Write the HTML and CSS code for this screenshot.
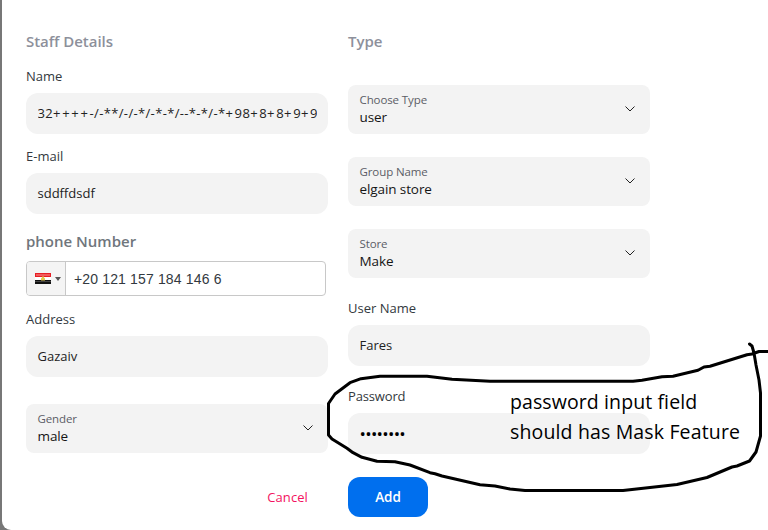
FILE: index.html
```html
<!DOCTYPE html>
<html lang="en">
<head>
<meta charset="utf-8">
<title>Add staff</title>
<link rel="stylesheet" href="styles.css">
</head>
<body>
<main class="dialog">
  <form class="columns">
    <section class="column">
      <h2 class="heading"><span>Staff Details</span></h2>
      <label class="label name-label"><span>Name</span></label>
      <div class="field"><div class="clip"><span class="long">32<i>++++</i>-/-**/-/-*/-*-*/--*-*/-*<i>+</i>98<i>+</i>8<i>+</i>8<i>+</i>9<i>+</i>9</span></div></div>
      <label class="label email-label"><span>E-mail</span></label>
      <div class="field"><span class="email">sddffdsdf</span></div>
      <h2 class="heading phone-heading"><span>phone Number</span></h2>
      <div class="phone">
        <div class="country">
          <svg width="16" height="11" viewBox="0 0 16 11"><path fill="#e71e25" d="M0 0h16v4H0z"/><path fill="#f15c5c" d="M1 1h14v2H1z"/><path fill="#fff" d="M0 4h16v3H0z"/><path fill="#111" d="M0 7h16v4H0z"/><path fill="#444" d="M0 8h16v1H0z"/><path fill="#e5c94d" d="M7 3.500h2v1l1 1v2H6v-2l1-1z"/></svg>
          <svg class="caret" width="6" height="4" viewBox="0 0 6 4"><path d="M0 0h6L3 4z" fill="#555"/></svg>
        </div>
        <span class="number">+20 121 157 184 146 6</span>
      </div>
      <label class="label address-label"><span>Address</span></label>
      <div class="field"><span>Gazaiv</span></div>
      <div class="select gender"><div><small>Gender</small><b>male</b></div><svg class="chevron" viewBox="0 0 10 6"><path d="M.5.5 5 5 9.500.5"/></svg></div>
      <div class="actions"><a class="cancel"><span>Cancel</span></a></div>
    </section>
    <section class="column">
      <h2 class="heading type-heading"><span>Type</span></h2>
      <div class="select type"><div><small>Choose Type</small><b>user</b></div><svg class="chevron" viewBox="0 0 10 6"><path d="M.5.5 5 5 9.500.5"/></svg></div>
      <div class="select"><div><small>Group Name</small><b>elgain store</b></div><svg class="chevron" viewBox="0 0 10 6"><path d="M.5.5 5 5 9.500.5"/></svg></div>
      <div class="select"><div><small>Store</small><b>Make</b></div><svg class="chevron" viewBox="0 0 10 6"><path d="M.5.5 5 5 9.500.5"/></svg></div>
      <label class="label user-label"><span>User Name</span></label>
      <div class="field"><span>Fares</span></div>
      <label class="label password-label"><span>Password</span></label>
      <div class="field"><span class="dots">••••••••</span></div>
      <button class="add" type="button">Add</button>
    </section>
  </form>
</main>
<svg class="ink" width="768" height="530" viewBox="0 0 768 530">
  <path d="M749.500 344L752 346 754 353 756 365 759 380 760.500 393V436L756 452 749.500 461 737 466 732 467 707 477.500 677 484.500 623 490.500H525L510 489 495 486 480 484.700 442 476 435 473.700 430 472.700 410 465 395 461.700 377 461.300 362 457.300 353 452.700 347 448.300 332 439 328.500 435V403.500L335 394 350 382.700 361 378.700 380 376.300H427L452 379.300 490 381.300H633L642 380.300 662 376.700 673 376.300 698 370.300 704 367 710 366.300 747 354.700 752 354 759 351.500H768"/>
</svg>
<p class="note"><span class="note-first">password input field</span><br><span class="note-second">should has Mask Feature</span></p>
</body>
</html>
```
FILE: styles.css
```css
* { box-sizing: border-box; }
body { margin: 0; height: 530px; overflow: hidden; background: #777; font-family: "Open Sans", "Noto Sans", sans-serif; font-size: 13px; color: #222; }
.dialog { height: 530px; margin-left: 2px; background: #fff; border-bottom-left-radius: 9px; }
.columns { display: flex; gap: 20px; padding: 30px 0 0 24px; }
.column { width: 302px; display: flex; flex-direction: column; }
.heading { margin: 0; height: 22px; line-height: 22px; font-size: 15px; font-weight: 600; color: #8d909b; white-space: nowrap; letter-spacing: -.05px; }
.label { height: 20px; line-height: 20px; color: #333940; font-size: 13px; white-space: nowrap; }
.name-label { margin: 14px 0 7px; }
.email-label { margin: 12px 0 7px; }
.field { height: 41px; padding: 0 12px 0 11.500px; background: #f3f3f3; border-radius: 12px; line-height: 41px; }
.clip { width: 279px; overflow: hidden; white-space: nowrap; letter-spacing: .34px; }
.clip i { font-style: normal; letter-spacing: 1.700px; }
.phone-heading { margin: 16px 0 9px; color: #70767c; letter-spacing: 0; }
.phone { display: flex; align-items: center; width: 300px; height: 35px; border: 1px solid #c8c8c8; border-radius: 4px; font: 14px "Liberation Sans", sans-serif; letter-spacing: .15px; color: #333940; }
.country { display: flex; align-items: center; gap: 4px; width: 39px; height: 33px; padding-left: 8px; border-right: 1px solid #c8c8c8; background: #f4f4f4; border-radius: 3px 0 0 3px; }
.number { margin-left: 8px; white-space: nowrap; }
.address-label { margin: 13px 0 7px; }
.select { height: 49px; margin-bottom: 23px; padding: 6px 15px 0 11.500px; display: flex; justify-content: space-between; border-radius: 8px; background: #f3f3f3; }
.select small, .select b { display: block; font-weight: 400; white-space: nowrap; }
.select small { height: 17px; line-height: 18px; font-size: 11.500px; letter-spacing: -.1px; color: #5b5d66; }
.select b { line-height: 19px; font-size: 13.500px; letter-spacing: -.1px; color: #151515; }
.chevron { width: 10px; height: 6px; margin-top: 15px; fill: none; stroke: #222; stroke-width: 1; }
.gender { margin: 27px 0 0; }
.actions { display: flex; justify-content: flex-end; height: 40px; margin-top: 24px; padding-right: 20px; line-height: 40px; }
.cancel { color: #f31260; font-size: 13px; letter-spacing: .1px; }
.type { margin-top: 33px; }
.user-label { margin: -3px 0 7px; }
.password-label { margin: 20px 0 7px; letter-spacing: -.15px; }
.dots { font-size: 17px; letter-spacing: -.7px; color: #000; }
.add { width: 80px; height: 40px; margin-top: 23px; padding: 0; border: 0; border-radius: 12px; background: #006fee; color: #fff; font: 600 13.500px "Open Sans", sans-serif; }
.ink { position: absolute; left: 0; top: 0; fill: none; stroke: #000; stroke-width: 3; stroke-linejoin: round; stroke-linecap: round; }
.note { position: absolute; left: 510px; top: 387px; margin: 0; font-size: 19.500px; line-height: 30px; color: #000; white-space: nowrap; }
.note-first { letter-spacing: .1px; }
.note-second { letter-spacing: .15px; }
```
